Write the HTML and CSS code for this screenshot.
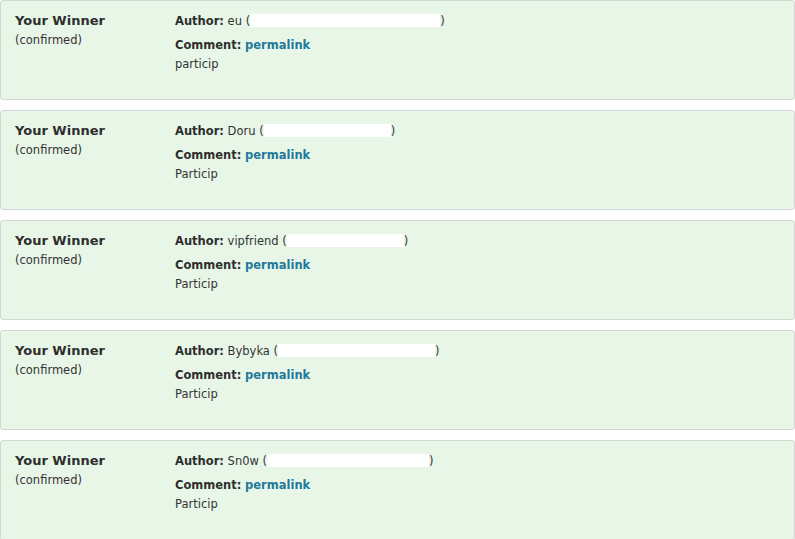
FILE: index.html
```html
<!DOCTYPE html>
<html>
<head>
<meta charset="utf-8">
<link rel="stylesheet" href="styles.css">
</head>
<body>
<div class="list">
  <div class="card">
    <div class="who"><div class="title">Your Winner</div><div class="sub">(confirmed)</div></div>
    <div class="info">
      <div class="line"><b>Author:</b> eu (<span class="mask" style="width:190px"></span>)</div>
      <div class="line2"><b>Comment:</b> <a href="#">permalink</a></div>
      <div class="text">particip</div>
    </div>
  </div>
  <div class="card">
    <div class="who"><div class="title">Your Winner</div><div class="sub">(confirmed)</div></div>
    <div class="info">
      <div class="line"><b>Author:</b> Doru (<span class="mask" style="width:127px"></span>)</div>
      <div class="line2"><b>Comment:</b> <a href="#">permalink</a></div>
      <div class="text">Particip</div>
    </div>
  </div>
  <div class="card">
    <div class="who"><div class="title">Your Winner</div><div class="sub">(confirmed)</div></div>
    <div class="info">
      <div class="line"><b>Author:</b> vipfriend (<span class="mask" style="width:117px"></span>)</div>
      <div class="line2"><b>Comment:</b> <a href="#">permalink</a></div>
      <div class="text">Particip</div>
    </div>
  </div>
  <div class="card">
    <div class="who"><div class="title">Your Winner</div><div class="sub">(confirmed)</div></div>
    <div class="info">
      <div class="line"><b>Author:</b> Bybyka (<span class="mask" style="width:157px"></span>)</div>
      <div class="line2"><b>Comment:</b> <a href="#">permalink</a></div>
      <div class="text">Particip</div>
    </div>
  </div>
  <div class="card">
    <div class="who"><div class="title">Your Winner</div><div class="sub">(confirmed)</div></div>
    <div class="info">
      <div class="line"><b>Author:</b> Sn0w (<span class="mask" style="width:162px"></span>)</div>
      <div class="line2"><b>Comment:</b> <a href="#">permalink</a></div>
      <div class="text">Particip</div>
    </div>
  </div>
</div>
</body>
</html>
```
FILE: styles.css
```css
html, body { margin: 0; padding: 0; background: #fff; }
body { font-family: Verdana, "DejaVu Sans", sans-serif; color: #333; }
.list { display: flex; flex-direction: column; gap: 10px; width: 795px; }
.card {
  box-sizing: border-box;
  height: 100px;
  background: #e8f6e8;
  border: 1px solid #d4d8d4;
  border-radius: 3px;
  display: flex;
  padding: 12px 0 0 14px;
}
.who { width: 160px; }
.title { font-size: 13px; font-weight: bold; line-height: 16px; color: #2e2e2e; }
.sub { font-size: 11.5px; line-height: 14px; margin-top: 4px; }
.info { font-size: 11.5px; }
.line { line-height: 16px; }
.line b, .line2 b { font-weight: bold; color: #2e2e2e; }
.line2 { line-height: 16px; margin-top: 8px; }
.text { line-height: 16px; margin-top: 3px; }
.mask { display: inline-block; height: 13px; background: #fff; vertical-align: -2px; }
a { color: #23799a; font-weight: bold; text-decoration: none; }
```
